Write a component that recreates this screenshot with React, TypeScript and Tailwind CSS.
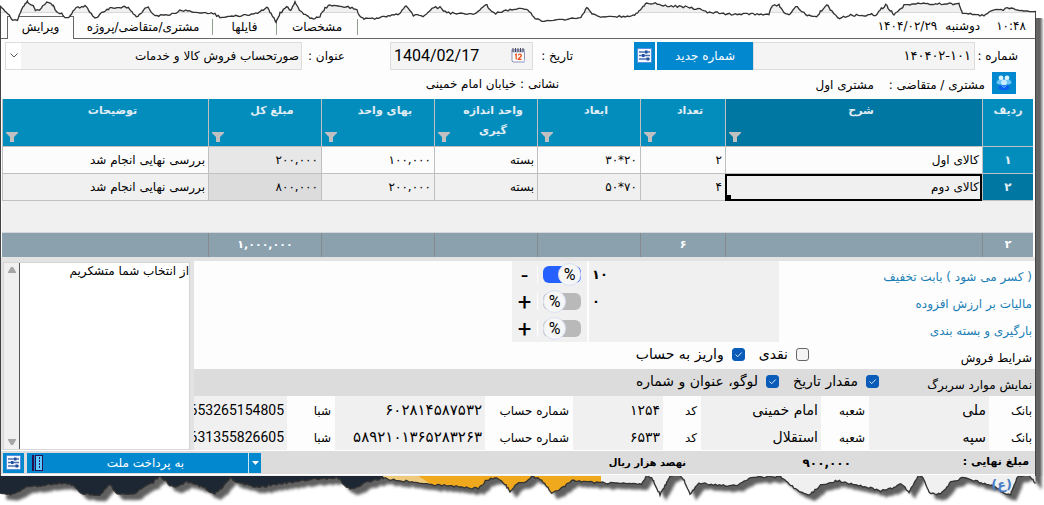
import React, { useState } from "react";

type Point = [number, number];

const TOP_EDGE: Point[] = [
  [0, 20], [18, 38], [28, 45], [38, 60], [52, 60], [66, 25], [82, 3], [86, 12], [100, 16], [106, 30], [118, 32], [128, 20], [140, 6], [158, 14], [165, 30], [185, 42], [200, 55], [212, 48], [222, 30], [234, 22], [255, 18], [270, 38], [285, 54], [292, 54], [300, 40], [316, 36], [325, 26], [352, 22], [385, 22], [400, 42], [414, 49], [430, 30], [445, 20], [455, 38], [465, 49], [510, 43], [545, 30], [600, 40], [640, 40], [660, 52], [725, 48], [760, 40], [780, 35], [800, 20], [810, 36], [828, 66], [840, 40], [860, 22], [872, 32], [885, 8], [898, 30], [920, 48], [940, 56], [960, 48], [975, 24], [990, 14], [1020, 18],
  [1068, 26], [1080, 48], [1092, 58], [1130, 54], [1170, 46], [1200, 42], [1218, 18], [1240, 45], [1275, 47], [1300, 24], [1320, 22], [1340, 38], [1425, 42], [1458, 12], [1470, 30], [1487, 40], [1530, 28], [1580, 26], [1605, 55], [1625, 63], [1700, 60], [1740, 54], [1760, 24], [1780, 44], [1815, 52], [1900, 48], [1925, 25], [1940, 10], [1960, 8], [1990, 18], [2050, 20],
  [2100, 28], [2122, 36], [2182, 42], [2307, 42], [2317, 15], [2337, 16], [2352, 40], [2367, 44], [2387, 18], [2422, 46], [2450, 48], [2480, 14], [2502, 42], [2519, 54], [2552, 46], [2627, 44], [2657, 14], [2682, 44], [2712, 16], [2742, 12], [2877, 12], [2887, 38], [2917, 44], [2952, 46], [2972, 32], [3022, 26], [3082, 32], [3108, 34],
];

const BOTTOM_EDGE: Point[] = [
  [0, 345], [20, 348], [50, 340], [75, 325], [130, 318], [190, 312], [220, 318], [245, 345], [300, 348], [330, 316], [350, 345], [400, 348], [430, 325], [460, 310], [480, 290], [500, 310], [520, 325], [560, 310], [610, 325], [640, 345], [670, 325], [690, 296], [710, 310], [770, 325], [860, 312], [940, 302], [1015, 297], [1030, 315],
  [1050, 330], [1070, 325], [1095, 310], [1150, 298], [1200, 305], [1270, 314], [1350, 322], [1435, 328], [1460, 302], [1490, 298], [1515, 315], [1530, 338], [1550, 316], [1580, 305], [1595, 292], [1610, 295], [1630, 310], [1655, 342], [1690, 325], [1715, 306], [1790, 310], [1870, 315], [1925, 315], [1940, 290], [1955, 295], [1980, 346], [1995, 320], [2010, 290], [2035, 282], [2050, 300], [2070, 345], [2082, 332],
  [2097, 312], [2152, 318], [2212, 322], [2247, 298], [2297, 292], [2342, 294], [2372, 320], [2412, 345], [2432, 345], [2462, 318], [2512, 306], [2582, 320], [2642, 336], [2682, 325], [2702, 312], [2727, 340], [2757, 286], [2767, 295], [2787, 340], [2822, 346], [2852, 310], [2887, 296], [2932, 308], [2982, 322], [3007, 340], [3032, 345], [3052, 295], [3082, 285], [3107, 312],
];

function roughen(points: Point[]): string {
  const out: string[] = [];
  for (let i = 0; i < points.length - 1; i++) {
    const [x1, y1] = points[i];
    const [x2, y2] = points[i + 1];
    const steps = Math.max(1, Math.round(Math.hypot(x2 - x1, y2 - y1) / 6));
    for (let s = 0; s < steps; s++) {
      const t = s / steps;
      const noise = Math.sin((i * 7 + s) * 78.233) * 43758.5453;
      const jitter = Math.round((noise - Math.floor(noise) - 0.5) * 6);
      out.push(`${Math.round(x1 + (x2 - x1) * t)},${Math.round(y1 + (y2 - y1) * t) + jitter}`);
    }
  }
  out.push(points[points.length - 1].join(","));
  return out.join(" ");
}

const topLine = roughen(TOP_EDGE);
const bottomLine = roughen(BOTTOM_EDGE);

function TornTop() {
  return (
    <svg className="pointer-events-none absolute inset-x-0 top-0 h-6 w-full" viewBox="0 0 3132 72" preserveAspectRatio="none" aria-hidden="true">
      <polygon points={`0,-5 ${topLine} 3132,60 3132,-5`} fill="#fff" />
      <polyline points={topLine} fill="none" stroke="#333" strokeWidth="4" />
    </svg>
  );
}

function TornBottom() {
  return (
    <svg className="block h-7 w-full" viewBox="0 291 3132 84" preserveAspectRatio="none" aria-hidden="true">
      <defs>
        <clipPath id="torn">
          <polygon points={`0,280 ${bottomLine} 3107,280`} />
        </clipPath>
        <filter id="soft" x="-2%" y="-20%" width="104%" height="150%">
          <feGaussianBlur stdDeviation="4" />
        </filter>
      </defs>
      <g transform="translate(18 18)">
        <polygon points={`10,250 ${bottomLine} 3107,250`} fill="#606060" filter="url(#soft)" />
      </g>
      <g clipPath="url(#torn)">
        <rect x="0" y="280" width="3132" height="90" fill="#f0f0f0" />
        <rect x="0" y="280" width="1803" height="90" fill="#f0a81c" />
        <path d="M0 280H1238L1300 320H0z" fill="#efca7c" />
        <path d="M0 280H1140L1170 320V370H0z" fill="#1c2733" />
      </g>
      <polyline points={bottomLine} fill="none" stroke="#333" strokeWidth="4" />
    </svg>
  );
}

function SlidersIcon() {
  return (
    <svg width="15" height="15" viewBox="0 0 15 15" aria-hidden="true">
      <rect x="0.5" y="0.5" width="14" height="14" rx="1" fill="#f4f8ff" stroke="#5b8fe0" />
      <path d="M2 4h11M2 7.500h11M2 11h11" stroke="#4a6fae" strokeWidth="1.300" />
      <path d="M8 2.500h2.500v3H8zM5 6h2.500v3H5zM9.500 9.500H12v3H9.500z" fill="#1f4f9e" />
    </svg>
  );
}

function CalendarIcon() {
  return (
    <svg width="15" height="15" viewBox="0 0 15 15" aria-hidden="true">
      <path d="M1 2h12.500v12H2L1 13z" fill="#fff" stroke="#8d93b8" />
      <path d="M0.500 1h13.500v3.500H0.500z" fill="#aab0cc" />
      <path d="M2 0v4M4.500 0v4M7 0v4M9.500 0v4M12 0v4" stroke="#4a4a5c" strokeWidth="1" />
      <path d="M4 7l1.200-.8V11.500M7.300 7.300c.4-1.500 3.200-1.500 3 .3-.1 1.200-2 2.100-3 3.700h3.300" fill="none" stroke="#f0521e" strokeWidth="1.300" />
      <path d="M11 14l3-3v3z" fill="#c3c8e4" />
    </svg>
  );
}

function PeopleIcon() {
  return (
    <svg width="16" height="16" viewBox="0 0 16 16" aria-hidden="true">
      <circle cx="5" cy="3" r="2.400" fill="#d9f3ff" />
      <circle cx="11" cy="3" r="2.400" fill="#d9f3ff" />
      <path d="M0.500 8.500c0-4 3-4 4.500-3.500L8 7l3-2c1.500-.5 4.500-.5 4.500 3.500l-3 1h-9z" fill="#6cc8fa" />
      <circle cx="8" cy="7.500" r="2.900" fill="#c6ecff" />
      <path d="M2.500 13c0-3.500 3-3.500 5.500-2.500 2.500-1 5.500-1 5.500 2.500-1.500 3-9.500 3-11 0z" fill="#0b5ff0" />
      <path d="M5.500 10.500L8 12.500l2.500-2" fill="none" stroke="#5fc0ff" />
    </svg>
  );
}

function FunnelButton({ label }: { label: string }) {
  return (
    <button type="button" aria-label={label} className="absolute bottom-1 left-[3px] block">
      <svg width="12" height="10" viewBox="0 0 12 10" aria-hidden="true">
        <path d="M0 0h12v1L8 5v5H4V5L0 1z" fill="#c0c0c0" />
      </svg>
    </button>
  );
}

function Check({ label, on }: { label: string; on?: boolean }) {
  const [checked, setChecked] = useState(!!on);
  return (
    <label className="flex items-center gap-2 text-sm">
      <span className="grid">
        <input
          type="checkbox"
          checked={checked}
          onChange={() => setChecked(!checked)}
          className="col-start-1 row-start-1 size-[13px] appearance-none rounded-[3px] border border-[#666] bg-[#f4f4f4] checked:border-[#0a5cb8] checked:bg-[#0a5cb8]"
        />
        {checked && (
          <svg className="pointer-events-none col-start-1 row-start-1" width="13" height="13" viewBox="0 0 13 13" aria-hidden="true">
            <path d="M3.500 6.500l2.200 2.200 4-4.200" fill="none" stroke="#dceaff" strokeWidth="1" />
          </svg>
        )}
      </span>
      <span>{label}</span>
    </label>
  );
}

function Adjustment({ label, value, sign, on }: { label: string; value: string; sign: string; on?: boolean }) {
  const [percent, setPercent] = useState(!!on);
  return (
    <div className="flex h-[27px]">
      <a href="#" className="w-64 pt-2 pr-[3px] text-xs text-[#1b7fb5]">{label}</a>
      <input aria-label={label} defaultValue={value} dir="ltr" className="w-[190px] bg-[#f0f0f0] px-[3px] text-left text-[13px] font-bold outline-none" />
      <div className="mr-[2px] flex w-[75px] items-center bg-[#f0f0f0] font-['Roboto',sans-serif]">
        <label className="mr-[6px] flex h-[19px] w-[38px] items-center">
          <input type="checkbox" role="switch" aria-label={`% ${label}`} checked={percent} onChange={() => setPercent(!percent)} className="peer sr-only" />
          <span className="flex h-[17px] w-full items-center justify-end rounded-md bg-[#b9b9b9] peer-checked:justify-start peer-checked:bg-[#2660ff]">
            <span className="flex size-[23px] shrink-0 items-center justify-center rounded-full border border-[#d8e0f4] bg-[#f6f6f6] text-base">%</span>
          </span>
        </label>
        <span className="mr-[5px] h-[17px] w-px bg-white" />
        <button type="button" aria-label={`${sign} ${label}`} className="flex-1 text-center text-2xl leading-5">{sign}</button>
      </div>
    </div>
  );
}

const columns = [
  { title: "شرح", active: true },
  { title: "تعداد" },
  { title: "ابعاد" },
  { title: "واحد اندازه گیری" },
  { title: "بهای واحد" },
  { title: "مبلغ کل" },
  { title: "توضیحات" },
];

const rows = [
  ["۱", "کالای اول", "۲", "۳۰*۲۰", "بسته", "۱۰۰,۰۰۰", "۲۰۰,۰۰۰", "بررسی نهایی انجام شد"],
  ["۲", "کالای دوم", "۴", "۵۰*۷۰", "بسته", "۲۰۰,۰۰۰", "۸۰۰,۰۰۰", "بررسی نهایی انجام شد"],
];

const totals = ["۲", "", "۶", "", "", "", "۱,۰۰۰,۰۰۰", ""];

function ItemsTable() {
  return (
    <table className="w-full table-fixed border-separate border-spacing-0 text-xs">
      <colgroup>
        <col className="w-[51px]" />
        <col />
        <col className="w-[85px]" />
        <col className="w-[103px]" />
        <col className="w-[103px]" />
        <col className="w-[113px]" />
        <col className="w-[113px]" />
        <col className="w-[206px]" />
      </colgroup>
      <thead>
        <tr className="h-12 bg-[#028dbd] align-top text-[11px] leading-5 text-[#e2eef4]">
          <th className="border-b border-l border-[#c0c0c0] pt-[2px] font-bold">ردیف</th>
          {columns.map((c) => (
            <th key={c.title} className={`relative border-b border-l border-[#c0c0c0] pt-[2px] pr-1 pl-[18px] font-bold ${c.active ? "bg-[#0077a3]" : ""}`}>
              {c.title}
              <FunnelButton label={`فیلتر ${c.title}`} />
            </th>
          ))}
        </tr>
      </thead>
      <tbody>
        {rows.map((row, r) => (
          <tr key={row[0]} className={`h-[27px] ${r === 0 ? "bg-[#fcfcfc]" : "bg-[#f0f0f0]"}`}>
            {row.map((cell, c) => {
              if (c === 0)
                return (
                  <th key={c} scope="row" className={`border-b border-l border-[#c0c0c0] font-bold text-[#e2eef4] ${r === 1 ? "bg-[#0077a3]" : "bg-[#028dbd]"}`}>
                    {cell}
                  </th>
                );
              const selected = r === 1 && c === 1;
              const shade = c === 6 ? (r === 0 ? "bg-[#e7e7e7]" : "bg-[#dcdcdc]") : "";
              return (
                <td key={c} className={`border-b border-l border-[#c0c0c0] pr-[3px] whitespace-nowrap ${shade} ${selected ? "relative outline-2 -outline-offset-2 outline-black" : ""}`}>
                  <span dir={c === 3 ? "ltr" : undefined}>{cell}</span>
                  {selected && <span className="absolute bottom-0 left-0 size-[5px] bg-black" />}
                </td>
              );
            })}
          </tr>
        ))}
        <tr className="h-8 bg-[#f0f0f0]">
          <td colSpan={8} className="border-b border-[#d4d8da]" />
        </tr>
      </tbody>
      <tfoot>
        <tr className="h-6 bg-[#8ba2ae] text-white">
          {totals.map((t, i) => (
            <td key={i} className="border-l border-[#858a8f] text-center text-[11px] font-bold last:border-l-0">{t}</td>
          ))}
        </tr>
      </tfoot>
    </table>
  );
}

const banks = [
  { bank: "ملی", branch: "امام خمینی", code: "۱۲۵۴", account: "۶۰۲۸۱۴۵۸۷۵۳۲", iban: "653265154805" },
  { bank: "سپه", branch: "استقلال", code: "۶۵۳۳", account: "۵۸۹۲۱۰۱۳۶۵۲۸۳۲۶۳", iban: "631355826605" },
];

function BankField({ label, value, labelClass, fieldClass, textClass = "text-sm" }: { label: string; value: string; labelClass: string; fieldClass: string; textClass?: string }) {
  return (
    <label className={`flex ${fieldClass}`}>
      <span className={`shrink-0 pt-[7px] text-xs whitespace-nowrap ${labelClass}`}>{label}</span>
      <input defaultValue={value} className={`h-full w-full min-w-0 bg-[#f0f0f0] pr-[3px] outline-none ${textClass}`} />
    </label>
  );
}

const tabs = ["ویرایش", "مشتری/متقاضی/پروژه", "فایلها", "مشخصات"];
const tabWidths = ["w-[67px]", "w-[139px]", "w-16", "w-[81px]"];

export default function App() {
  return (
    <div dir="rtl" className="relative bg-white font-['DejaVu_Sans',sans-serif] text-xs text-black">
      <div dir="ltr" className="flex">
        <div dir="rtl" className="min-w-0 flex-1 border-x border-[#444] bg-[#fdfdfd]">
          <div className="h-3 bg-[#f0f0f0]" />
          <header className="flex h-[27px] items-stretch border-t border-[#d9d9d9]">
            <div className="flex flex-1 items-center gap-4 border-b border-[#666] pr-[9px]">
              <span>۱۰:۴۸</span>
              <span className="flex gap-2">
                <span>دوشنبه</span>
                <span>۱۴۰۴/۰۲/۲۹</span>
              </span>
            </div>
            <nav dir="ltr" className="flex">
              <span className="w-[6px] border-b border-[#666]" />
              {tabs.map((t, i) => (
                <button
                  key={t}
                  type="button"
                  className={`${tabWidths[i]} whitespace-nowrap ${i === 0 ? "mt-[3px] border-x border-t border-[#666] pb-[2px]" : "flex items-center border-b border-[#666] pt-[3px]"}`}
                >
                  {i === 0 ? t : <span className="block flex-1 border-r border-[#8fa08f]">{t}</span>}
                </button>
              ))}
            </nav>
          </header>

          <div className="flex h-[33px] items-center pr-[17px] pl-1">
            <label htmlFor="number" className="w-[43px] whitespace-nowrap">شماره :</label>
            <input id="number" defaultValue="۱۴۰۴۰۲-۱۰۱" dir="ltr" className="h-7 w-[222px] border border-[#dcdcdc] bg-[#f4f4f4] px-[3px] text-right text-[13px] outline-none" />
            <button type="button" className="h-7 w-24 bg-[#0288cf] text-white">شماره جدید</button>
            <button type="button" aria-label="تنظیمات شماره" className="mr-[2px] flex h-7 w-[21px] items-center justify-center bg-[#0288cf]">
              <SlidersIcon />
            </button>
            <label htmlFor="date" className="mr-[61px] w-10 whitespace-nowrap">تاریخ :</label>
            <div dir="ltr" className="flex h-7 w-[143px] items-center border border-[#dcdcdc] bg-[#f4f4f4] pr-[6px] pl-[3px]">
              <input id="date" defaultValue="1404/02/17" className="w-full min-w-0 bg-transparent font-['Roboto',sans-serif] text-base outline-none" />
              <button type="button" aria-label="انتخاب تاریخ"><CalendarIcon /></button>
            </div>
            <label htmlFor="title" className="mr-[45px] w-[43px] whitespace-nowrap">عنوان :</label>
            <div className="grid h-7 min-w-0 flex-1">
              <select id="title" className="col-start-1 row-start-1 h-7 appearance-none border border-[#dcdcdc] bg-[#f4f4f4] pr-[2px] pl-4 text-xs outline-none">
                <option>صورتحساب فروش کالا و خدمات</option>
              </select>
              <span className="pointer-events-none col-start-1 row-start-1 m-px flex w-[15px] items-center justify-center justify-self-end bg-white">
                <svg width="8" height="5" viewBox="0 0 8 5" aria-hidden="true"><path d="M0.500 0.500L4 4l3.500-3.500" fill="none" stroke="#555" /></svg>
              </span>
            </div>
          </div>

          <div className="flex h-[27px] items-start pr-[19px]">
            <button type="button" aria-label="مشتریان" className="flex h-[22px] w-6 items-center justify-center bg-[#0288cf]"><PeopleIcon /></button>
            <span className="mr-[7px] w-[111px] pt-[5px] whitespace-nowrap">مشتری / متقاضی :</span>
            <span className="w-[315px] pt-[5px]">مشتری اول</span>
            <span className="pt-1">نشانی : خیابان امام خمینی</span>
          </div>

          <div className="pr-[2px] pl-px">
            <ItemsTable />
          </div>

          <div className="flex border-t-4 border-[#e3e3e3] bg-[#e3e3e3]">
            <section className="min-w-0 flex-1 bg-[#fdfdfd]">
              <Adjustment label="( کسر می شود ) بابت تخفیف" value="۱۰" sign="-" on />
              <Adjustment label="مالیات بر ارزش افزوده" value="۰" sign="+" />
              <Adjustment label="بارگیری و بسته بندی" value="" sign="+" />
              <div className="flex h-[27px] items-center">
                <span className="w-[226px] pt-1 pr-[3px]">شرایط فروش</span>
                <div className="flex gap-[14px] pb-[3px]">
                  <Check label="نقدی" />
                  <Check label="واریز به حساب" on />
                </div>
              </div>
              <div className="flex h-[27px] items-center bg-[#dcdcdc]">
                <span className="w-[156px] pt-1 pr-[3px] whitespace-nowrap">نمایش موارد سربرگ</span>
                <div className="flex gap-[14px] pb-[3px]">
                  <Check label="مقدار تاریخ" on />
                  <Check label="لوگو، عنوان و شماره" on />
                </div>
              </div>
              {banks.map((b) => (
                <div key={b.bank} className="flex h-[27px]">
                  <BankField label="بانک" value={b.bank} labelClass="w-[46px] pr-[3px]" fieldClass="w-[166px]" />
                  <BankField label="شعبه" value={b.branch} labelClass="w-12 pr-1" fieldClass="w-[168px]" />
                  <BankField label="کد" value={b.code} labelClass="w-[38px] pr-1" fieldClass="w-32" />
                  <BankField label="شماره حساب" value={b.account} labelClass="w-[88px] pr-1" fieldClass="w-[238px]" textClass="text-[15px]" />
                  <BankField label="شبا" value={b.iban} labelClass="w-12 pr-1" fieldClass="min-w-0 flex-1" textClass="font-['Roboto',sans-serif] text-sm" />
                </div>
              ))}
            </section>
            <aside dir="ltr" className="mt-px mr-1 ml-[2px] flex w-[187px] border border-[#d6d6d6] bg-white">
              <div className="flex w-4 flex-col items-center justify-between border-r border-[#555] bg-[#f0f0f0] py-1">
                <button type="button" aria-label="بالا"><svg width="8" height="6" viewBox="0 0 8 6" aria-hidden="true"><path d="M0 6V5l3-5h2l3 5v1z" fill="#a5a5a5" /></svg></button>
                <button type="button" aria-label="پایین"><svg width="8" height="6" viewBox="0 0 8 6" aria-hidden="true"><path d="M0 0v1l3 5h2l3-5V0z" fill="#a5a5a5" /></svg></button>
              </div>
              <textarea aria-label="یادداشت" dir="rtl" defaultValue="از انتخاب شما متشکریم" className="min-w-0 flex-1 resize-none overflow-hidden bg-white text-xs outline-none" />
            </aside>
          </div>

          <footer className="flex h-6 items-center border-t border-white bg-[#dcdcdc] pr-[6px] pl-[2px] font-bold">
            <span className="w-[178px] text-[11px]">مبلغ نهایی :</span>
            <span className="w-[165px]">۹۰۰,۰۰۰</span>
            <span className="flex-1 text-[10px]">نهصد هزار ریال</span>
            <div className="flex h-5 w-[234px] bg-[#0288cf] font-normal text-white">
              <button type="button" aria-label="گزینه‌های پرداخت" className="flex w-[13px] items-center justify-center border-l border-[#cfe6f5]">
                <svg width="7" height="4" viewBox="0 0 7 4" aria-hidden="true"><path d="M0 0h7L3.500 4z" fill="#fff" /></svg>
              </button>
              <button type="button" className="flex flex-1 items-center pl-[5px]">
                <span className="flex-1">به پرداخت ملت</span>
                <svg width="11" height="16" viewBox="0 0 11 16" aria-hidden="true">
                  <rect x="0" y="0" width="2" height="16" fill="#2a1250" />
                  <rect x="3.500" y="0.500" width="7" height="15" fill="#5cc8ff" stroke="#2a1250" />
                  <path d="M7.500 2v12" stroke="#2a1250" strokeDasharray="2 1" />
                </svg>
              </button>
            </div>
            <button type="button" aria-label="تنظیمات پرداخت" className="mr-[3px] flex h-5 w-[21px] items-center justify-center bg-[#0288cf]">
              <SlidersIcon />
            </button>
          </footer>
          <div className="h-[2px] border-t border-white bg-[#f0f0f0]" />
        </div>
        <div className="mt-[18px] w-2 bg-linear-to-r from-[#646464] from-50% to-white" />
      </div>
      <TornTop />
      <div className="relative">
        <TornBottom />
        <span className="absolute top-0 right-8 text-[13px] font-bold text-[#4a7fc4]">(ع)</span>
      </div>
    </div>
  );
}
